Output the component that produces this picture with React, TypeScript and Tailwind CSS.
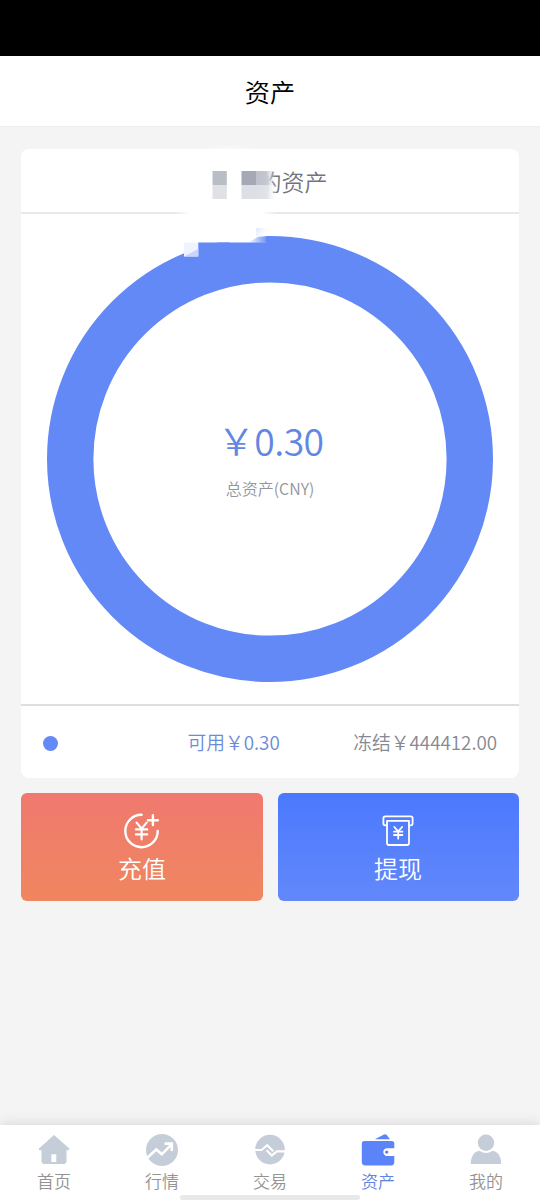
import React from "react";

const HomeIcon = () => (
  <svg viewBox="0 0 34 34" className="w-[34px] h-[34px]" fill="#c4cdd8">
    <path
      fillRule="evenodd"
      d="M17 1 L32.3 14.6 Q32.8 16.2 31 16.2 H29.5 V27 Q29.5 30 26.5 30 H7.5 Q4.5 30 4.5 27 V16.2 H2.5 Q1.2 15.8 2 14.6 Z M14.3 20.3 V28 H19.3 V20.3 Z"
    />
  </svg>
);

const MarketIcon = () => (
  <svg viewBox="0 0 34 34" className="w-[34px] h-[34px]" fill="none">
    <circle cx="17" cy="16" r="16" fill="#c4cdd8" />
    <path
      d="M2.3 23.8 L11.3 15.5 L16.8 20.3 L25.8 11.1 M19.5 9.6 H26.8 V16.9"
      stroke="#fff"
      strokeWidth="2.6"
    />
  </svg>
);

const TradeIcon = () => (
  <svg viewBox="0 0 34 34" className="w-[34px] h-[34px]" fill="none">
    <circle cx="17" cy="15.6" r="14.8" fill="#c4cdd8" />
    <path
      d="M2 16 H8.5 L14.2 11.3 L20.3 17.2 M13.6 16.3 L18.8 21.6 L23.8 17.4 H32"
      stroke="#fff"
      strokeWidth="2.2"
    />
  </svg>
);

const WalletIcon = () => (
  <svg viewBox="0 0 34 34" className="w-[34px] h-[34px]" fill="#5b84fb">
    <path d="M13.8 5.2 L23 .5 Q24.6 0 25.5 .8 L29 5.2 Z" />
    <path
      fillRule="evenodd"
      d="M3.3 7 H30.7 Q33.3 7 33.3 9.5 V14.2 H25.6 A3.9 3.9 0 0 0 25.6 21.9 H33.3 V28 Q33.3 31.4 30 31.4 H4.3 Q.8 31.4 .8 28 V9.5 Q.8 7 3.3 7 Z"
    />
    <circle cx="25.7" cy="18.1" r="1.7" />
  </svg>
);

const UserIcon = () => (
  <svg viewBox="0 0 34 34" className="w-[34px] h-[34px]" fill="#c4cdd8">
    <circle cx="17" cy="8.8" r="8.2" />
    <path d="M1.8 30 C1.8 22 5.5 17.4 10.5 16.8 Q17 21.2 23.5 16.8 C28.5 17.4 32.2 22 32.2 30 Z" />
  </svg>
);

const RechargeIcon = () => (
  <svg
    viewBox="0 0 38 38"
    className="w-[38px] h-[38px]"
    fill="none"
    stroke="#fff"
    strokeWidth="2.4"
    strokeLinecap="round"
  >
    <path d="M18.6 2.8 A16.2 16.2 0 1 0 34.7 18.9" />
    <path d="M29.9 3.3 V13.1 M25 8.2 H34.8" />
    <path
      d="M13.6 10.6 L18.6 16.6 L23.6 10.6 M18.6 16.6 V27.5 M13 17.4 H24.2 M13 22.4 H24.2"
      strokeWidth="2.2"
    />
  </svg>
);

const WithdrawIcon = () => (
  <svg
    viewBox="0 0 38 38"
    className="w-[38px] h-[38px]"
    fill="none"
    stroke="#fff"
    strokeWidth="1.8"
    strokeLinejoin="round"
    strokeLinecap="round"
  >
    <path d="M8 13.4 H6.3 Q4.4 13.4 4.4 11.5 V6.2 Q4.4 4.3 6.3 4.3 H31.7 Q33.6 4.3 33.6 6.2 V11.5 Q33.6 13.4 31.7 13.4 H30" />
    <path d="M8 8.8 H30 V31 Q30 33 28 33 H10 Q8 33 8 31 Z" />
    <path d="M15.3 15 L19.2 19.4 L23.1 15 M19.2 19.4 V26.7 M15 19.7 H23.4 M15 23 H23.4" />
  </svg>
);

// Pixelated cells that hide the owner's name
const NameMask = () => (
  <svg
    viewBox="170 142 120 118"
    className="absolute left-[148.6px] top-[-7.4px] w-[120px] h-[118px]"
  >
    <defs>
      <linearGradient id="fadeRight">
        <stop offset="0" stopColor="#fff" />
        <stop offset="1" stopColor="#fff" stopOpacity="0" />
      </linearGradient>
      <linearGradient id="fadeLeft">
        <stop offset="0" stopColor="#fff" stopOpacity="0" />
        <stop offset="1" stopColor="#fff" />
      </linearGradient>
      <linearGradient id="cellFade">
        <stop offset="0" stopColor="#bec0cb" />
        <stop offset="0.5" stopColor="#c4c6cf" />
        <stop offset="1" stopColor="#e6e7eb" stopOpacity="0" />
      </linearGradient>
      <linearGradient id="cellFadeLight">
        <stop offset="0" stopColor="#dedfe5" />
        <stop offset="0.5" stopColor="#e2e3e8" />
        <stop offset="1" stopColor="#fff" stopOpacity="0" />
      </linearGradient>
      <linearGradient id="blueCell" x2="1" y2="0.4">
        <stop offset="0" stopColor="#dfe6fd" />
        <stop offset="1" stopColor="#fff" stopOpacity="0" />
      </linearGradient>
      <linearGradient id="ringFade">
        <stop offset="0" stopColor="#6389f6" stopOpacity="0" />
        <stop offset="1" stopColor="#6389f6" />
      </linearGradient>
      <radialGradient id="topGlow">
        <stop offset="0" stopColor="#fff" stopOpacity="0.8" />
        <stop offset="1" stopColor="#fff" stopOpacity="0" />
      </radialGradient>
    </defs>
    <ellipse cx="229" cy="152" rx="32" ry="8" fill="url(#topGlow)" />
    <rect x="175" y="208" width="15" height="10" fill="url(#fadeLeft)" />
    <rect x="190" y="208" width="72" height="10" fill="#fff" />
    <rect x="262" y="208" width="14" height="10" fill="url(#fadeRight)" />
    <rect x="198" y="228" width="68" height="14.5" fill="#fff" />
    <path d="M198 242.5 H230 L198 256 Z" fill="#6389f6" />
    <path d="M248 242.8 L258 236.8 L268 236 V242.8 Z" fill="url(#ringFade)" />
    <rect x="256" y="228" width="16" height="8.5" fill="url(#blueCell)" />
    <rect x="184" y="242.5" width="14.3" height="14" fill="#eff3fe" />
    <path d="M184 256.5 L198.3 249 V256.5 Z" fill="#c8d5fd" />
    <rect x="212.5" y="171" width="14.3" height="14.2" fill="#b9bdc6" />
    <rect x="212.5" y="185" width="14.3" height="14" fill="#e0e1e5" />
    <rect x="256" y="168" width="8" height="31" fill="#fff" />
    <rect x="264" y="168" width="8" height="31" fill="url(#fadeRight)" />
    <rect x="241.5" y="171" width="14.5" height="14.2" fill="#a6a9b5" />
    <rect x="241.5" y="185" width="14.5" height="14" fill="#dddfe4" />
    <rect x="256" y="171" width="20" height="14.2" fill="url(#cellFade)" />
    <rect x="256" y="185" width="22" height="14" fill="url(#cellFadeLight)" />
  </svg>
);

const YUAN = "\uFFE5";

const tabs = [
  { label: "首页", icon: <HomeIcon /> },
  { label: "行情", icon: <MarketIcon /> },
  { label: "交易", icon: <TradeIcon /> },
  { label: "资产", icon: <WalletIcon />, active: true },
  { label: "我的", icon: <UserIcon /> },
];

const App: React.FC = () => {
  return (
    <div className="w-[540px] h-[1200px] flex flex-col overflow-hidden bg-[#f4f4f4] font-[350] font-['Noto_Sans_CJK_SC',sans-serif]">
      {/* Status bar */}
      <div className="h-14 shrink-0 bg-black" />
      <header className="h-[71px] shrink-0 flex items-center justify-center bg-white border-b border-[#eeeeee] pt-[2px] text-[25.2px] text-black">
        资产
      </header>

      <main className="flex-1 px-[21.4px] pt-[22.4px]">
        {/* Asset card */}
        <section className="relative h-[629px] flex flex-col rounded-lg bg-white">
          <div className="h-[65px] shrink-0 flex items-center justify-center border-b-2 border-[#e9e9e9] text-[23px] text-[#70747f]">
            <span className="w-[46px]" />
            的资产
          </div>

          <div className="relative h-[489.6px] shrink-0 flex justify-center pt-[22px]">
            <svg viewBox="0 0 446 446" className="w-[446px] h-[446px]">
              <circle
                cx="223"
                cy="223"
                r="199.8"
                fill="none"
                stroke="#6389f6"
                strokeWidth="46.4"
              />
            </svg>
            <div className="absolute inset-x-0 top-[199px] flex flex-col items-center">
              <p className="pl-px text-[37.4px] leading-[54px] tracking-[-0.6px] text-[#6287e2]">
                {YUAN}0.30
              </p>
              <p className="mt-[9px] text-[16px] leading-6 text-[#92959c]">
                总资产(CNY)
              </p>
            </div>
          </div>

          <div className="flex-1 flex items-center border-t-2 border-[#dedede] pl-[21.5px] pr-[21.5px] text-[18.8px]">
            <span className="mt-[2px] w-[15px] h-[15px] rounded-full bg-[#6389f6]" />
            <span className="ml-[129.5px] text-[#6b8bd8]">
              可用{YUAN}0.30
            </span>
            <span className="ml-auto text-[#858993]">
              冻结{YUAN}444412.00
            </span>
          </div>

          <NameMask />
        </section>

        {/* Actions */}
        <div className="mt-[14.5px] grid grid-cols-2 gap-[15px] text-white text-[24px] leading-[36px]">
          <button className="h-[108px] flex flex-col items-center pt-[19px] rounded-md bg-linear-to-b from-[#ef796f] to-[#f0865f]">
            <RechargeIcon />
            <span>充值</span>
          </button>
          <button className="h-[108px] flex flex-col items-center pt-[19px] rounded-md bg-linear-to-b from-[#4b79fe] to-[#6288fa]">
            <WithdrawIcon />
            <span>提现</span>
          </button>
        </div>
      </main>

      {/* Tab bar */}
      <nav className="relative h-[75.5px] shrink-0 grid grid-cols-5 bg-white shadow-[0_-1px_12px_rgba(0,0,0,0.12)]">
        {tabs.map((tab) => (
          <div
            key={tab.label}
            className={`flex flex-col items-center pt-[9.5px] text-[17px] leading-[26px] ${
              tab.active ? "text-[#6082e0]" : "text-[#939393]"
            }`}
          >
            {tab.icon}
            <span>{tab.label}</span>
          </div>
        ))}
        <div className="absolute bottom-0 left-[180px] w-[180px] h-[5px] rounded-full bg-[#e9e9e9]" />
      </nav>
    </div>
  );
};

export default App;
